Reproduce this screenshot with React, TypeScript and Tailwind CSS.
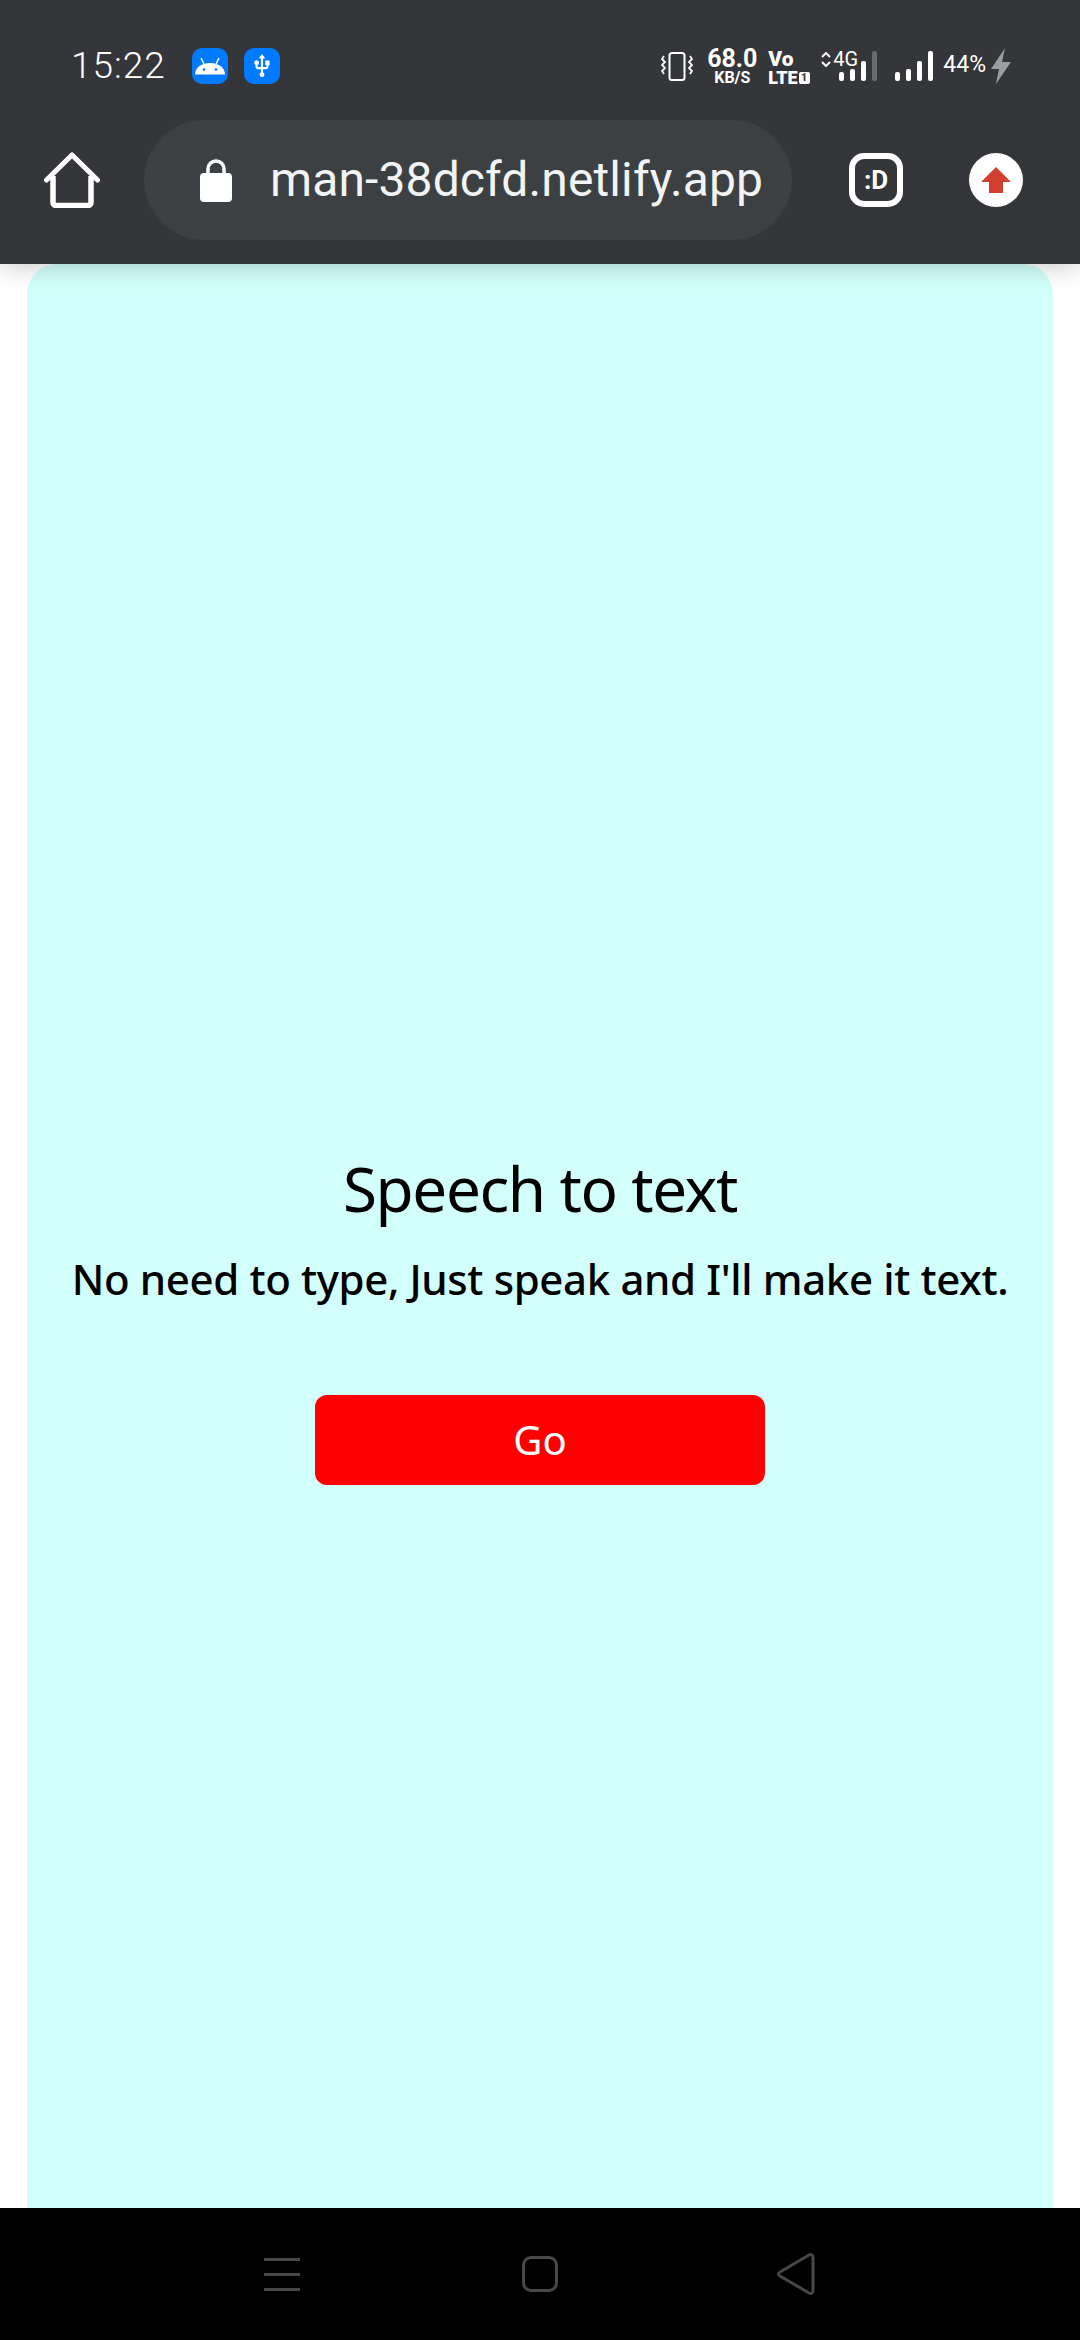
import { MdUsb } from 'react-icons/md';

const SignalBars = ({ lastOff }: { lastOff?: boolean }) => (
    <svg width="38" height="30" viewBox="0 0 38 30" className="block">
        <rect x="0" y="21" width="5" height="9" rx="2" fill="#fff" />
        <rect x="11" y="18" width="5" height="12" rx="2" fill="#fff" />
        <rect x="22" y="10" width="5" height="20" rx="2" fill="#fff" />
        <rect x="33" y="0" width="5" height="30" rx="2" fill={lastOff ? '#6a6b6e' : '#fff'} />
    </svg>
);

const StatusBar = () => (
    <div className="h-[120px] flex items-start justify-between pl-[71px] pr-[69px] text-white">
        <div className="flex items-center pt-[48px] h-[84px]">
            <span className="w-[121px] text-[37px] leading-[36px] font-light tracking-[1px]">15:22</span>
            <div className="w-[36px] h-[36px] rounded-[10px] bg-[#007aff] flex items-center justify-center">
                <svg width="30" height="17" viewBox="0 0 30 17">
                    <path d="M6 0l3 6M24 0l-3 6" stroke="#fff" strokeWidth="1.500" />
                    <path d="M0 16.500c0-6.500 6-11.500 15-11.500s15 5 15 11.500z" fill="#fff" />
                    <circle cx="9" cy="11.500" r="1.300" fill="#007aff" />
                    <circle cx="21" cy="11.500" r="1.300" fill="#007aff" />
                </svg>
            </div>
            <div className="ml-[16px] w-[36px] h-[36px] rounded-[10px] bg-[#007aff] flex items-center justify-center">
                <MdUsb size={26} color="#fff" />
            </div>
        </div>
        <div className="flex items-start pt-[48px]">
            <svg width="32" height="30" viewBox="0 0 32 30" fill="none" className="mt-[4px]">
                <rect x="8.500" y="1" width="15" height="27" rx="2.500" stroke="#fff" strokeWidth="2" />
                <path d="M3 4l-2 3 3 3-3 3 3 3-3 3 2 3M29 4l2 3-3 3 3 3-3 3 3 3-2 3" stroke="#fff" strokeWidth="1.800" />
            </svg>
            <div className="ml-[15px] w-[48px] flex flex-col items-center font-['Roboto',sans-serif] font-bold">
                <span className="text-[25px] leading-[21px]">68.0</span>
                <span className="text-[16px] leading-[14px] mt-[2px]">KB/S</span>
            </div>
            <div className="ml-[12px] w-[42px] flex flex-col font-['Roboto',sans-serif] font-black">
                <span className="text-[21px] leading-[20px] mt-[1px]">Vo</span>
                <div className="flex items-center mt-[1px]">
                    <span className="text-[18px] leading-[15px]">LTE</span>
                    <span className="ml-[1px] w-[11px] h-[12px] bg-white rounded-[2px] text-[#35363a] text-[10px] leading-[12px] text-center">1</span>
                </div>
            </div>
            <div className="ml-[11px] w-[56px] relative h-[33px]">
                <svg width="10" height="15" viewBox="0 0 10 15" fill="none" className="absolute left-0 top-[4px]">
                    <path d="M1 5l4-4 4 4M1 10l4 4 4-4" stroke="#fff" strokeWidth="2" />
                </svg>
                <span className="absolute left-[12px] top-[3px] text-[20px] leading-[16px] font-['Roboto',sans-serif]">4G</span>
                <div className="absolute left-[18px] top-[3px]">
                    <SignalBars lastOff />
                </div>
            </div>
            <div className="ml-[18px] mt-[3px]">
                <SignalBars />
            </div>
            <span className="ml-[10px] mt-[6px] text-[23px] leading-[22px] font-['Roboto',sans-serif]">44%</span>
            <svg width="20" height="36" viewBox="0 0 20 36" className="ml-[5px]">
                <path d="M14 0L0 21h8L5 36l15-22h-9z" fill="#9b9c9e" />
            </svg>
        </div>
    </div>
);

const Toolbar = () => (
    <div className="h-[144px] flex items-start">
        <div className="w-[144px] h-[120px] flex items-center justify-center">
            <svg width="56" height="56" viewBox="0 0 56 56" fill="none">
                <path d="M2.500 28L28 3l25.500 25" stroke="#fff" strokeWidth="5" strokeLinecap="round" strokeLinejoin="round" />
                <path d="M9 24v26.500a3 3 0 003 3h32a3 3 0 003-3V24" stroke="#fff" strokeWidth="5.500" />
            </svg>
        </div>
        <div className="w-[648px] h-[120px] rounded-[60px] bg-[#3c4043] flex items-center pl-[56px]">
            <svg width="32" height="43" viewBox="0 0 32 43" className="flex-none">
                <path d="M8 16V10a8 8 0 0116 0v6" stroke="#fff" strokeWidth="3.500" fill="none" />
                <rect x="0" y="14" width="32" height="29" rx="4" fill="#fff" />
            </svg>
            <span className="ml-[38px] font-['Roboto',sans-serif] text-[48px] leading-[56px] tracking-[0.12px] text-[#f1f3f4] whitespace-nowrap">man-38dcfd.netlify.app</span>
        </div>
        <div className="ml-[57px] w-[54px] h-[54px] mt-[33px] rounded-[15px] border-[6px] border-white flex items-center justify-center font-['Roboto',sans-serif] font-bold text-white text-[26px] leading-none">
            :D
        </div>
        <div className="ml-[66px] w-[54px] h-[54px] mt-[33px] rounded-full bg-white flex items-center justify-center">
            <svg width="30" height="26" viewBox="0 0 30 26">
                <path d="M15 0l15 15h-8v11H8V15H0z" fill="#d23f31" />
            </svg>
        </div>
    </div>
);

const BottomNav = () => (
    <div className="h-[132px] bg-black flex items-start pt-[49px] pl-[264px]">
        <div className="w-[36px] h-[34px] flex flex-col justify-between pt-[1px]">
            <div className="h-[3px] bg-[#474747]" />
            <div className="h-[3px] bg-[#474747]" />
            <div className="h-[3px] bg-[#474747]" />
        </div>
        <div className="ml-[222px] -mt-[1px] w-[36px] h-[36px] rounded-[9px] border-[3px] border-[#474747]" />
        <svg width="38" height="42" viewBox="0 0 38 42" fill="none" className="ml-[219px] -mt-[4px]">
            <path d="M3 19L32 2c2-1 4 0 4 2v34c0 2-2 3-4 2L3 23c-2-1-2-3 0-4z" stroke="#474747" strokeWidth="3" />
        </svg>
    </div>
);

const App = () => {
    return (
        <div className="w-[1080px] h-[2340px] flex flex-col bg-white overflow-hidden">
            <div className="relative z-10 bg-[#35363a] shadow-[0_2px_24px_rgba(0,0,0,0.22)] font-['Roboto',sans-serif]">
                <StatusBar />
                <Toolbar />
            </div>
            <div className="flex-1 min-h-0 px-[27px]">
                <div className="h-full rounded-t-[30px] bg-[#d2fffb] flex flex-col items-center pt-[889px] text-black font-['Noto_Sans',sans-serif]">
                    <h1 className="text-[62px] leading-[70px] font-normal tracking-[-1.400px]">Speech to text</h1>
                    <p className="mt-[28px] text-[42px] leading-[56px] font-medium tracking-[-0.370px] whitespace-nowrap">No need to type, Just speak and I'll make it text.</p>
                    <button className="mt-[88px] w-[450px] h-[90px] rounded-[12px] bg-[#ff0000] text-white text-[40px]">Go</button>
                </div>
            </div>
            <BottomNav />
        </div>
    );
};
export default App;
